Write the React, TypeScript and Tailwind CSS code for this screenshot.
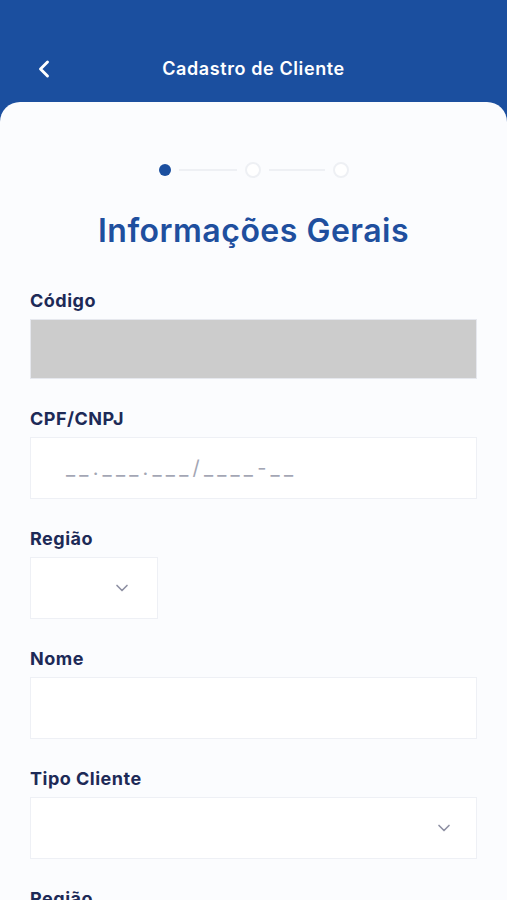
import { ChevronDown, ChevronLeft } from 'lucide-react'

type Field = {
  label: string
  kind: 'disabled' | 'text' | 'select' | 'selectSmall' | 'cpf'
}

const fields: Field[] = [
  { label: 'Código', kind: 'disabled' },
  { label: 'CPF/CNPJ', kind: 'cpf' },
  { label: 'Região', kind: 'selectSmall' },
  { label: 'Nome', kind: 'text' },
  { label: 'Tipo Cliente', kind: 'select' },
  { label: 'Região', kind: 'text' },
]

function FieldBox({ kind }: { kind: Field['kind'] }) {
  if (kind === 'disabled') {
    return <div className="h-[60px] w-full bg-[#cccccc] border border-[#e6e8ee]" />
  }
  if (kind === 'cpf') {
    return (
      <div className="h-[62px] w-full bg-white border border-[#eef0f5] flex items-center pl-[35px]">
        <span className="text-[20px] text-[#a3a6b4] tracking-[4.2px]">
          __.___.___/____-__
        </span>
      </div>
    )
  }
  if (kind === 'selectSmall') {
    return (
      <div className="h-[62px] w-[128px] bg-white border border-[#eef0f5] flex items-center justify-end pr-[25px]">
        <ChevronDown className="w-[20px] h-[20px] text-[#8e90a3]" strokeWidth={2} />
      </div>
    )
  }
  if (kind === 'select') {
    return (
      <div className="h-[62px] w-full bg-white border border-[#eef0f5] flex items-center justify-end pr-[22px]">
        <ChevronDown className="w-[20px] h-[20px] text-[#8e90a3]" strokeWidth={2} />
      </div>
    )
  }
  return <div className="h-[62px] w-full bg-white border border-[#eef0f5]" />
}

export default function App() {
  return (
    <div className="h-[900px] overflow-hidden bg-[#1b4f9f] font-['Inter',sans-serif]">
      {/* Cabeçalho */}
      <header className="h-[102px] relative flex items-end justify-center pb-[22px]">
        <ChevronLeft
          className="absolute left-[30px] top-[55px] w-[28px] h-[28px] text-white"
          strokeWidth={2.5}
        />
        <h1 className="text-white text-[18px] font-semibold leading-none mb-[2px] tracking-[0.6px]">
          Cadastro de Cliente
        </h1>
      </header>

      {/* Conteúdo */}
      <main className="bg-[#fbfcfe] rounded-t-[20px] h-[798px] px-[30px] pt-[60px]">
        {/* Etapas */}
        <div className="flex items-center justify-center gap-[8px]">
          <span className="w-[12px] h-[12px] rounded-full bg-[#1b4f9f]" />
          <span className="w-[58px] h-[2px] bg-[#eef0f4]" />
          <span className="w-[16px] h-[16px] rounded-full bg-white border-2 border-[#eef0f4]" />
          <span className="w-[56px] h-[2px] bg-[#eef0f4]" />
          <span className="w-[16px] h-[16px] rounded-full bg-white border-2 border-[#eef0f4]" />
        </div>

        <h2 className="text-center text-[#1f4f9e] text-[32px] font-semibold leading-none mt-[37px] tracking-[0.5px]">
          Informações Gerais
        </h2>

        <div className="mt-[45px] flex flex-col gap-[31px]">
          {fields.map((f, i) => (
            <div key={i} className="flex flex-col">
              <label className="text-[#1d2a57] text-[18px] font-bold leading-none h-[19px] mb-[8px] tracking-[0.5px]">
                {f.label}
              </label>
              <FieldBox kind={f.kind} />
            </div>
          ))}
        </div>
      </main>
    </div>
  )
}
